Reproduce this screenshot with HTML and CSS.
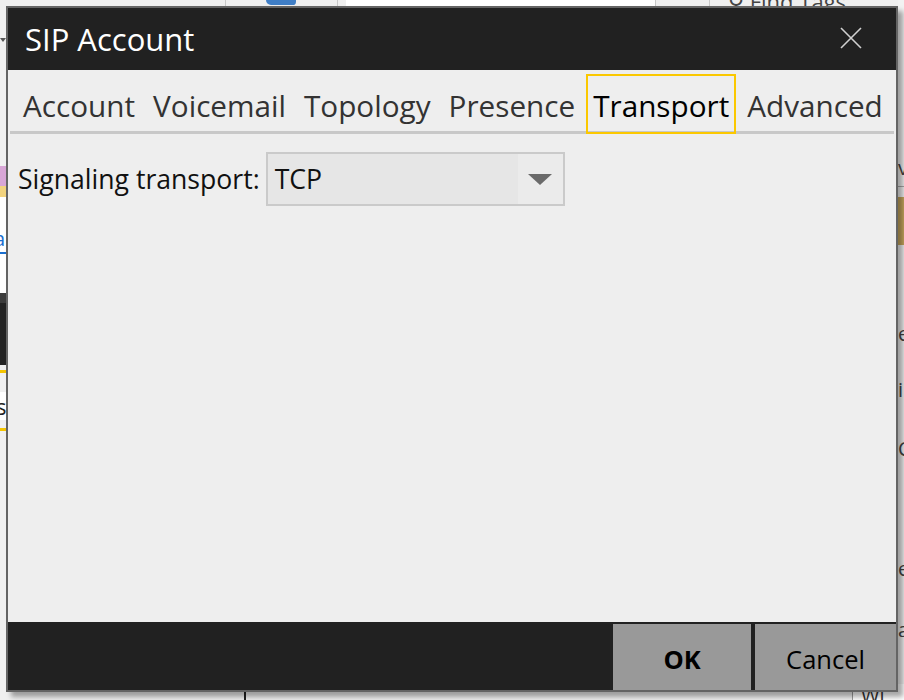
FILE: index.html
```html
<!DOCTYPE html>
<html lang="en">
<head>
<meta charset="utf-8">
<title>SIP Account</title>
<link rel="stylesheet" href="styles.css">
</head>
<body>
<div class="desktop">
  <div class="bg-top">
    <span class="bg-line l1"></span>
    <span class="bg-blue"></span>
    <span class="bg-line l2"></span>
    <span class="bg-white"></span>
    <span class="bg-line l3"></span>
    <span class="bg-line l4"></span>
    <span class="bg-find">&#9906; Find Tags</span>
  </div>
  <div class="bg-left">
    <span class="bl-arrow"></span>
    <span class="bl-pink"></span>
    <span class="bl-yellow"></span>
    <span class="bl-white"></span>
    <span class="bl-link">a</span>
    <span class="bl-dark"></span>
    <span class="bl-y1"></span>
    <span class="bl-s">s</span>
    <span class="bl-y2"></span>
  </div>
  <div class="bg-right">
    <span class="br-v">v</span>
    <span class="br-gold"></span>
    <span class="br-t t1">e</span>
    <span class="br-t t2">i</span>
    <span class="br-t t3">C</span>
    <span class="br-t t4">e</span>
    <span class="br-t t5">a</span>
  </div>
  <div class="bg-bottom">
    <span class="bb-line"></span>
    <span class="bb-box">Wi</span>
  </div>

  <div class="dialog">
    <header class="titlebar">
      <span class="title">SIP Account</span>
      <span class="close" aria-label="Close">
        <svg width="22" height="22" viewBox="0 0 22 22"><path d="M1 1 L21 21 M21 1 L1 21" stroke="#d0d0d0" stroke-width="1.6" fill="none"/></svg>
      </span>
    </header>
    <nav class="tabs">
      <span class="tab">Account</span>
      <span class="tab">Voicemail</span>
      <span class="tab">Topology</span>
      <span class="tab">Presence</span>
      <span class="tab active">Transport</span>
      <span class="tab">Advanced</span>
    </nav>
    <main class="content">
      <div class="field">
        <span class="label">Signaling transport:</span>
        <div class="select">
          <span class="value">TCP</span>
          <span class="arrow"><svg width="24" height="11" viewBox="0 0 24 11"><path d="M0 0 H24 L12 11 Z" fill="#6a6a6a"/></svg></span>
        </div>
      </div>
    </main>
    <footer class="buttons">
      <button class="btn ok">OK</button>
      <button class="btn">Cancel</button>
    </footer>
  </div>
</div>
</body>
</html>
```
FILE: styles.css
```css
html, body {
  margin: 0;
  padding: 0;
}
body {
  width: 904px;
  height: 700px;
  overflow: hidden;
  background: #f0f0f0;
  font-family: "Open Sans", "Noto Sans", "Liberation Sans", sans-serif;
}
.desktop {
  position: relative;
  width: 904px;
  height: 700px;
  overflow: hidden;
  background: #f0f0f0;
}

/* ---- background application pieces (window behind) ---- */
.bg-top, .bg-left, .bg-right, .bg-bottom { position: absolute; }
.bg-top { left: 0; top: 0; width: 904px; height: 8px; background: #efefef; }
.bg-line { position: absolute; top: 0; width: 1px; height: 8px; background: #c8c8c8; }
.l1 { left: 225px; }
.l2 { left: 337px; }
.l3 { left: 655px; }
.l4 { left: 709px; }
.bg-blue { position: absolute; left: 266px; top: 0; width: 30px; height: 5px; background: #3f7ec6; border-radius: 0 0 12px 18px; }
.bg-white { position: absolute; left: 346px; top: 0; width: 309px; height: 8px; background: #fff; }
.bg-find { position: absolute; left: 728px; top: -14px; font-size: 22px; color: #444; white-space: nowrap; }

.bg-left { left: 0; top: 0; width: 6px; height: 700px; }
.bg-left span { position: absolute; left: 0; width: 6px; }
.bl-arrow { top: 38px; width: 0 !important; height: 0; border-left: 3px solid transparent; border-right: 3px solid transparent; border-top: 4px solid #555; }
.bl-pink { top: 166px; height: 20px; background: #d8a6d6; }
.bl-yellow { top: 186px; height: 11px; background: #f2d37e; }
.bl-white { top: 197px; height: 96px; background: #fff; }
.bl-link { top: 226px; height: 26px; font-size: 20px; line-height: 26px; color: #1a6fd0; overflow: hidden; border-bottom: 2px solid #1a6fd0; text-indent: -6px; }
.bl-dark { top: 293px; height: 72px; background: #232323; border-top: 10px solid #3c3c3c; box-sizing: border-box; }
.bl-y1 { top: 370px; height: 3px; background: #f4c400; }
.bl-s { top: 392px; height: 28px; font-size: 22px; line-height: 28px; color: #222; text-indent: -4px; overflow: hidden; background: #fff; }
.bl-y2 { top: 428px; height: 3px; background: #f4c400; }

.bg-right { left: 898px; top: 0; width: 6px; height: 700px; background: #f2f2f2; }
.bg-right span { position: absolute; left: 0; width: 6px; overflow: hidden; }
.br-v { top: 150px; height: 36px; font-size: 20px; line-height: 36px; color: #444; border-bottom: 1px solid #aaa; }
.br-gold { top: 197px; height: 48px; background: #c9a85e; }
.br-t { font-size: 20px; line-height: 24px; height: 24px; color: #444; }
.t1 { top: 322px; }
.t2 { top: 378px; }
.t3 { top: 437px; }
.t4 { top: 557px; }
.t5 { top: 618px; }

.bg-bottom { left: 0; top: 692px; width: 904px; height: 8px; background: #f0f0f0; }
.bb-line { position: absolute; left: 244px; top: 0; width: 2px; height: 8px; background: #222; }
.bb-box { position: absolute; left: 852px; top: -8px; width: 52px; height: 20px; font-size: 20px; line-height: 24px; color: #333; background: #fff; border-left: 1px solid #999; padding-left: 8px; box-sizing: border-box; }

/* ---- dialog ---- */
.dialog {
  position: absolute;
  left: 6px;
  top: 6px;
  width: 888px;
  height: 682px;
  border: 2px solid #646464;
  background: #eeeeee;
  display: flex;
  flex-direction: column;
  box-shadow: 5px 5px 5px rgba(0, 0, 0, 0.35);
  z-index: 2;
}
.titlebar {
  height: 62px;
  flex: none;
  background: #212121;
  display: flex;
  align-items: center;
  justify-content: space-between;
  padding: 0 34px 0 17px;
}
.title {
  color: #ffffff;
  font-size: 31px;
  line-height: 62px;
}
.close {
  display: flex;
  width: 22px;
  height: 22px;
  margin-top: -2px;
}

.tabs {
  flex: none;
  display: flex;
  align-items: flex-end;
  gap: 4px;
  height: 57px;
  padding: 4px 0 0 6px;
  margin: 0 2px;
  border-bottom: 3px solid #c8c8c8;
}
.tab {
  height: 52px;
  padding: 4px 5px 0;
  line-height: 52px;
  border: 2px solid transparent;
  margin-bottom: -3px;
  font-size: 29.7px;
  color: #333333;
  white-space: nowrap;
  position: relative;
}
.tab.active {
  border-color: #fbc800;
  color: #000000;
}

.content {
  flex: 1;
  padding: 18px 0 0 10px;
}
.field {
  display: flex;
  align-items: center;
  gap: 6px;
}
.label {
  font-size: 26.6px;
  color: #111111;
}
.select {
  width: 295px;
  height: 50px;
  border: 2px solid #cacaca;
  background: #e6e6e6;
  display: flex;
  align-items: center;
  justify-content: space-between;
}
.value {
  padding-left: 7px;
  font-size: 26.6px;
  color: #111111;
}
.arrow {
  width: 45px;
  height: 50px;
  background: #ebebeb;
  display: flex;
  align-items: center;
  justify-content: flex-start;
  padding-left: 10px;
  box-sizing: border-box;
}
.arrow svg { display: block; }

.buttons {
  flex: none;
  height: 66px;
  padding-top: 2px;
  background: #212121;
  display: flex;
  justify-content: flex-end;
  gap: 4px;
}
.btn {
  height: 66px;
  border: none;
  margin: 0;
  padding: 3px 0 0;
  background: #999999;
  color: #000000;
  font-family: "Open Sans", "Noto Sans", "Liberation Sans", sans-serif;
  font-size: 25.5px;
}
.btn.ok {
  width: 138px;
  font-weight: 700;
}
.btn:not(.ok) {
  width: 141px;
}
```
